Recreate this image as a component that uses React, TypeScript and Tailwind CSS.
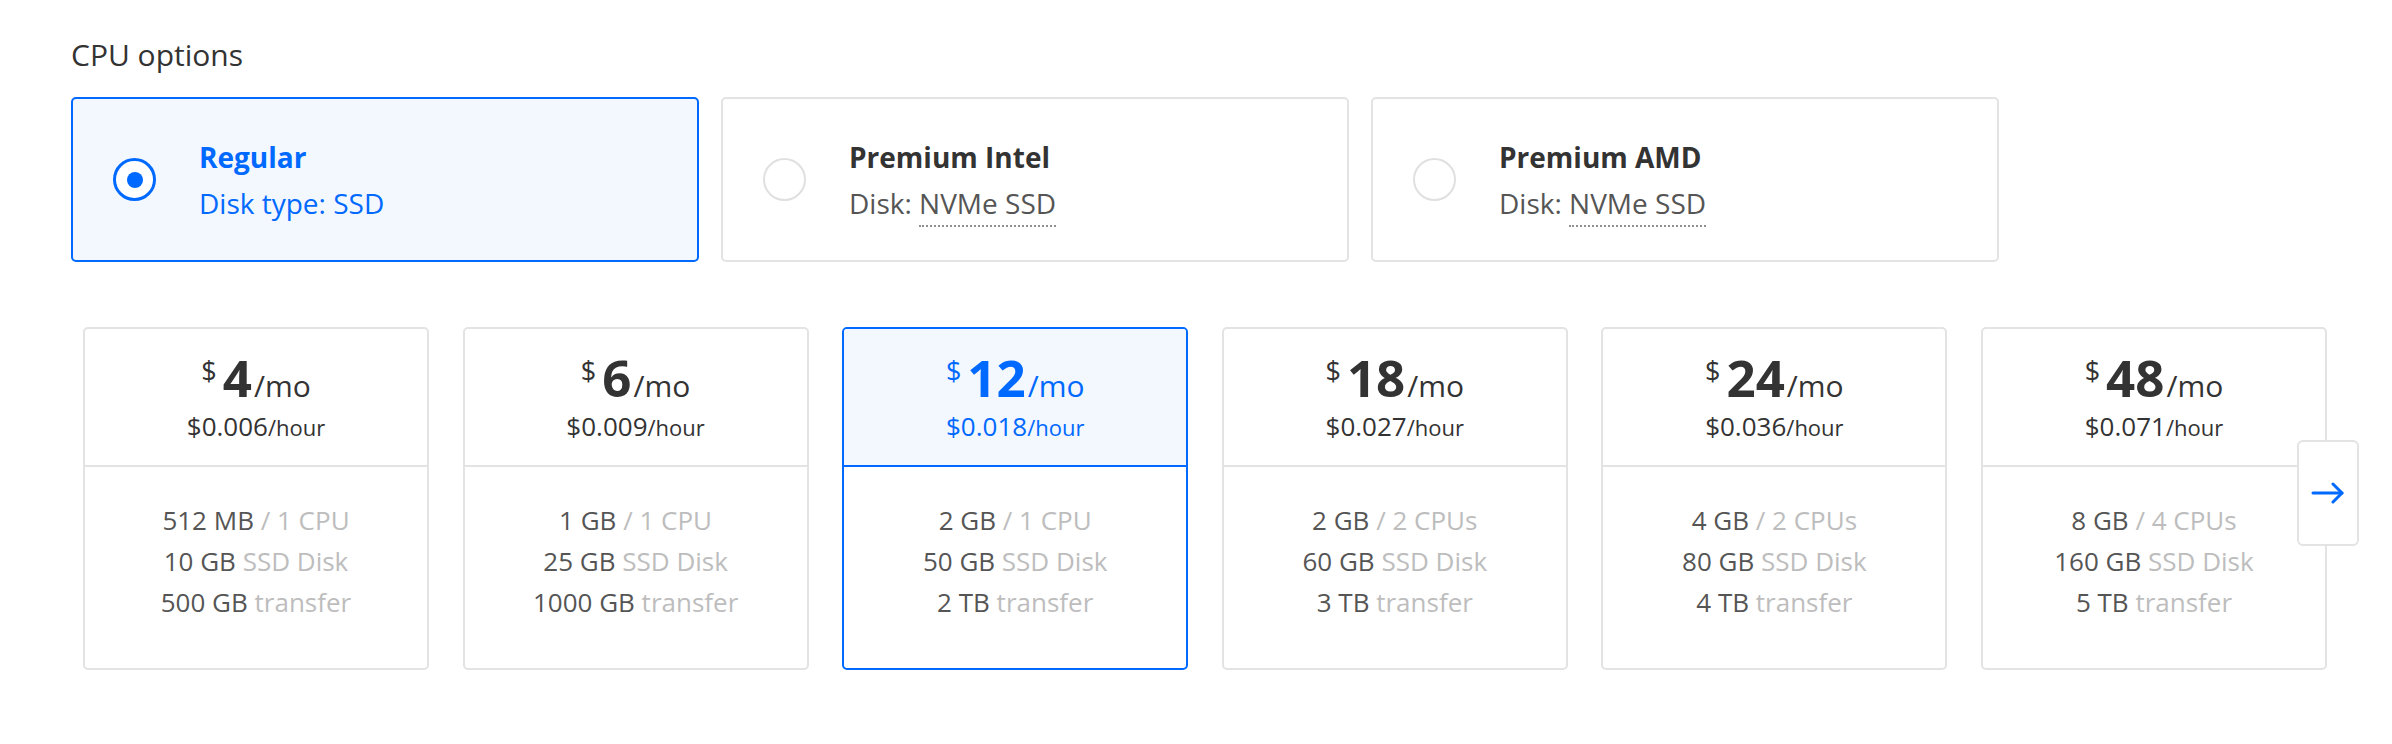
import React, { useState } from 'react';

const plans = [
  { mo: '4', hr: '$0.006', mem: '512 MB', cpu: '1 CPU', disk: '10 GB', transfer: '500 GB' },
  { mo: '6', hr: '$0.009', mem: '1 GB', cpu: '1 CPU', disk: '25 GB', transfer: '1000 GB' },
  { mo: '12', hr: '$0.018', mem: '2 GB', cpu: '1 CPU', disk: '50 GB', transfer: '2 TB' },
  { mo: '18', hr: '$0.027', mem: '2 GB', cpu: '2 CPUs', disk: '60 GB', transfer: '3 TB' },
  { mo: '24', hr: '$0.036', mem: '4 GB', cpu: '2 CPUs', disk: '80 GB', transfer: '4 TB' },
  { mo: '48', hr: '$0.071', mem: '8 GB', cpu: '4 CPUs', disk: '160 GB', transfer: '5 TB' },
];

const cpuOptions = [
  { title: 'Regular', label: 'Disk type:', disk: 'SSD', dotted: false },
  { title: 'Premium Intel', label: 'Disk:', disk: 'NVMe SSD', dotted: true },
  { title: 'Premium AMD', label: 'Disk:', disk: 'NVMe SSD', dotted: true },
];

function Radio({ checked }: { checked: boolean }) {
  return checked ? (
    <div className="w-[43px] h-[43px] shrink-0 rounded-full border-[3px] border-[#0069ff] bg-white flex items-center justify-center">
      <div className="w-[16px] h-[16px] rounded-full bg-[#0069ff]"></div>
    </div>
  ) : (
    <div className="w-[43px] h-[43px] shrink-0 rounded-full border-2 border-[#e0e0e0] bg-white"></div>
  );
}

export default function App() {
  const [cpu, setCpu] = useState(0);
  const [plan, setPlan] = useState(2);

  return (
    <div
      className="min-h-screen bg-white pt-[37px] pl-[71px]"
      style={{ fontFamily: '"Open Sans", "Liberation Sans", sans-serif' }}
    >
      <h1 className="text-[30px] leading-[36px] text-[#333] mb-[24px]">CPU options</h1>

      <div className="flex gap-[22px]">
        {cpuOptions.map((opt, i) => {
          const active = cpu === i;
          return (
            <div
              key={opt.title}
              onClick={() => setCpu(i)}
              className={
                active
                  ? 'w-[628px] h-[165px] flex items-center pl-[40px] rounded-[5px] border-2 border-[#0069ff] bg-[#f3f7fe] cursor-pointer'
                  : 'w-[628px] h-[165px] flex items-center pl-[40px] rounded-[5px] border-2 border-[#e3e3e3] bg-white cursor-pointer'
              }
            >
              <Radio checked={active} />
              <div className="ml-[43px]">
                <div className={active ? 'text-[28px] leading-[46px] font-bold text-[#0069ff]' : 'text-[28px] leading-[46px] font-bold text-[#333]'}>
                  {opt.title}
                </div>
                <div className={active ? 'text-[28px] leading-[46px] text-[#0069ff]' : 'text-[28px] leading-[46px] text-[#555]'}>
                  {opt.label}{' '}
                  {opt.dotted ? (
                    <span className="border-b-2 border-dotted border-[#8f8f8f] pb-[3px]">{opt.disk}</span>
                  ) : (
                    opt.disk
                  )}
                </div>
              </div>
            </div>
          );
        })}
      </div>

      <div className="flex gap-[33.6px] mt-[65px] ml-[12px]">
        {plans.map((p, i) => {
          const active = plan === i;
          const last = i === plans.length - 1;
          return (
            <div
              key={p.mo}
              onClick={() => setPlan(i)}
              className={
                active
                  ? 'relative w-[346px] h-[343px] shrink-0 flex flex-col rounded-[5px] border-2 border-[#0069ff] bg-white cursor-pointer'
                  : 'relative w-[346px] h-[343px] shrink-0 flex flex-col rounded-[5px] border-2 border-[#e3e3e3] bg-white cursor-pointer'
              }
            >
              <div
                className={
                  active
                    ? 'h-[138px] pt-[6px] flex flex-col items-center justify-center border-b-2 border-[#0069ff] bg-[#f3f7fe] rounded-t-[3px] text-[#0069ff]'
                    : 'h-[138px] pt-[6px] flex flex-col items-center justify-center border-b-2 border-[#e3e3e3] text-[#333]'
                }
              >
                <div className="flex items-baseline">
                  <span className="self-start mt-[4px] mr-[6px] text-[27px] leading-[24px]">$</span>
                  <span className="text-[51px] leading-[44px] font-bold">{p.mo}</span>
                  <span className="ml-[2px] text-[30px] leading-[44px]">/mo</span>
                </div>
                <div className="mt-[2px] leading-[32px]">
                  <span className="text-[26px]">{p.hr}</span>
                  <span className="text-[22px]">/hour</span>
                </div>
              </div>
              <div className="flex-1 pt-[33px] flex flex-col items-center text-[26px] leading-[41px] text-[#555]">
                <div>
                  {p.mem} <span className="text-[#bdbdbd]">/ {p.cpu}</span>
                </div>
                <div>
                  {p.disk} <span className="text-[#bdbdbd]">SSD Disk</span>
                </div>
                <div>
                  {p.transfer} <span className="text-[#bdbdbd]">transfer</span>
                </div>
              </div>
              {last && (
                <button className="absolute top-[111px] -right-[34px] w-[62px] h-[106px] rounded-[6px] border-2 border-[#e3e3e3] bg-white flex items-center justify-center">
                  <svg width="34" height="22" viewBox="0 0 34 22" fill="none" stroke="#0069ff" strokeWidth="3" strokeLinecap="round" strokeLinejoin="round">
                    <path d="M2 11h29" />
                    <path d="M22 2l9 9-9 9" />
                  </svg>
                </button>
              )}
            </div>
          );
        })}
      </div>
    </div>
  );
}
